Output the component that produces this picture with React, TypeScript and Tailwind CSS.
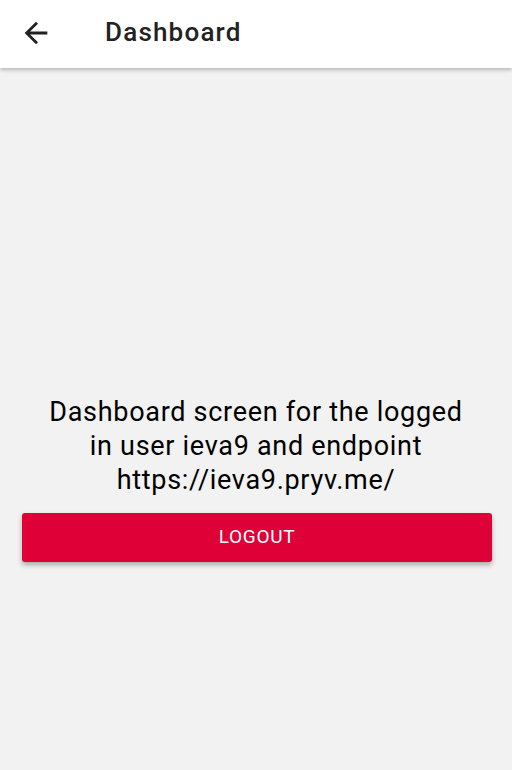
import React from 'react';

const BackArrow: React.FC = () => (
  <svg width="34" height="34" viewBox="0 0 24 24" fill="#212121">
    <path d="M20 11H7.83l5.59-5.59L12 4l-8 8 8 8 1.41-1.41L7.83 13H20v-2z" />
  </svg>
);

const App: React.FC = () => {
  return (
    <div className="flex flex-col w-full h-[770px] bg-[#f2f2f2] font-['Roboto',sans-serif]">
      <header className="relative z-10 flex items-center h-[68px] bg-white shadow-[0_2px_4px_rgba(0,0,0,0.25)]">
        <button className="flex items-center justify-center ml-[19px] w-[34px] h-[34px] -mt-[2px]">
          <BackArrow />
        </button>
        <h1 className="ml-[52px] text-[26px] font-medium tracking-[1.2px] text-[#222] leading-none -mt-[4px]">Dashboard</h1>
      </header>
      <main className="flex-1 flex flex-col items-stretch pt-[327px]">
        <p className="text-center text-[27px] leading-[34px] tracking-[0.7px] text-black px-4">
          Dashboard screen for the logged
          <br />
          in user ieva9 and endpoint
          <br />
          https://ieva9.pryv.me/
        </p>
        <button className="mt-[16px] ml-[22px] mr-[20px] h-[49px] rounded-[3px] bg-[#de0036] text-white text-[19px] tracking-[0.7px] shadow-[0_3px_5px_rgba(0,0,0,0.3)]">
          LOGOUT
        </button>
      </main>
    </div>
  );
};

export default App;
